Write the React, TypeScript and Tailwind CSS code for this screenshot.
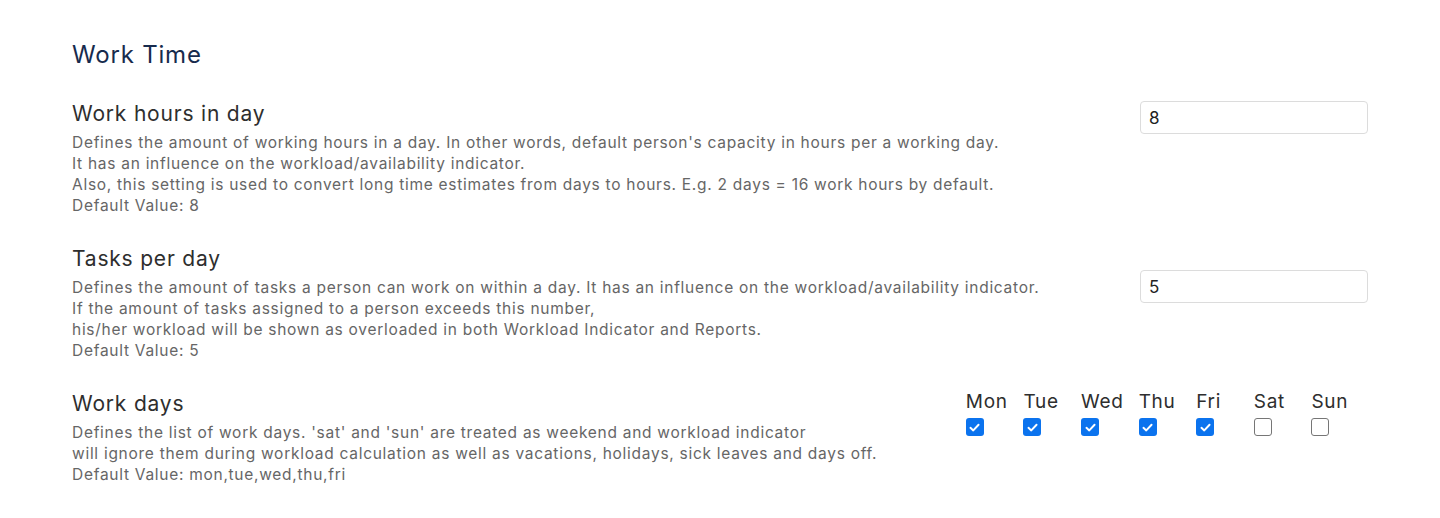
const days = [
  { label: 'Mon', on: true },
  { label: 'Tue', on: true },
  { label: 'Wed', on: true },
  { label: 'Thu', on: true },
  { label: 'Fri', on: true },
  { label: 'Sat', on: false },
  { label: 'Sun', on: false },
]

function Box({ on }: { on: boolean }) {
  if (on) {
    return (
      <span className="grid size-[18px] place-items-center rounded-[3px] bg-[#0b73ee]">
        <svg viewBox="0 0 16 16" className="size-[13px]" aria-hidden="true">
          <path d="M3 8.4 L6.5 11.6 L13 4.6" fill="none" stroke="white" strokeWidth="2.4" strokeLinecap="round" strokeLinejoin="round" />
        </svg>
      </span>
    )
  }
  return <span className="block size-[18px] rounded-[3px] border border-[#767676] bg-white" />
}

function Setting({
  title,
  lines,
  children,
  asideClass,
}: {
  title: string
  lines: string[]
  children: React.ReactNode
  asideClass: string
}) {
  return (
    <div className="flex items-start justify-between">
      <div>
        <h3 className="text-[21px] leading-[26px] tracking-[0.8px] text-[#2e2e2e]">{title}</h3>
        <div className="mt-[5px] text-[15.5px] leading-[21px] tracking-[0.72px] text-[#666]">
          {lines.map((l) => (
            <p key={l}>{l}</p>
          ))}
        </div>
      </div>
      <div className={asideClass}>{children}</div>
    </div>
  )
}

export default function App() {
  return (
    <div className="min-h-[518px] bg-white px-[72px] pt-[39px] font-['Inter','Noto_Sans',sans-serif]">
      <h2 className="text-[24px] leading-[32px] tracking-[0.8px] text-[#172b4d]">Work Time</h2>

      <div className="mt-[30px] flex flex-col gap-[30px]">
        <Setting
          title="Work hours in day"
          asideClass="pt-0"
          lines={[
            "Defines the amount of working hours in a day. In other words, default person's capacity in hours per a working day.",
            'It has an influence on the workload/availability indicator.',
            'Also, this setting is used to convert long time estimates from days to hours. E.g. 2 days = 16 work hours by default.',
            'Default Value: 8',
          ]}
        >
          <input
            defaultValue="8"
            className="h-[33px] w-[228px] rounded-[4px] border border-[#dcdcdc] px-[8px] text-[17px] text-[#222] outline-none"
          />
        </Setting>

        <Setting
          title="Tasks per day"
          asideClass="pt-[24px]"
          lines={[
            'Defines the amount of tasks a person can work on within a day. It has an influence on the workload/availability indicator.',
            'If the amount of tasks assigned to a person exceeds this number,',
            'his/her workload will be shown as overloaded in both Workload Indicator and Reports.',
            'Default Value: 5',
          ]}
        >
          <input
            defaultValue="5"
            className="h-[33px] w-[228px] rounded-[4px] border border-[#dcdcdc] px-[8px] text-[17px] text-[#222] outline-none"
          />
        </Setting>

        <Setting
          title="Work days"
          asideClass="-mt-[2px] mr-[-1px]"
          lines={[
            "Defines the list of work days. 'sat' and 'sun' are treated as weekend and workload indicator",
            'will ignore them during workload calculation as well as vacations, holidays, sick leaves and days off.',
            'Default Value: mon,tue,wed,thu,fri',
          ]}
        >
          <div className="flex">
            {days.map((d) => (
              <div key={d.label} className="flex w-[57.6px] flex-col items-start">
                <span className="text-[19px] leading-[26px] tracking-[0.7px] text-[#2e2e2e]">{d.label}</span>
                <span className="mt-[3px]">
                  <Box on={d.on} />
                </span>
              </div>
            ))}
          </div>
        </Setting>
      </div>
    </div>
  )
}
